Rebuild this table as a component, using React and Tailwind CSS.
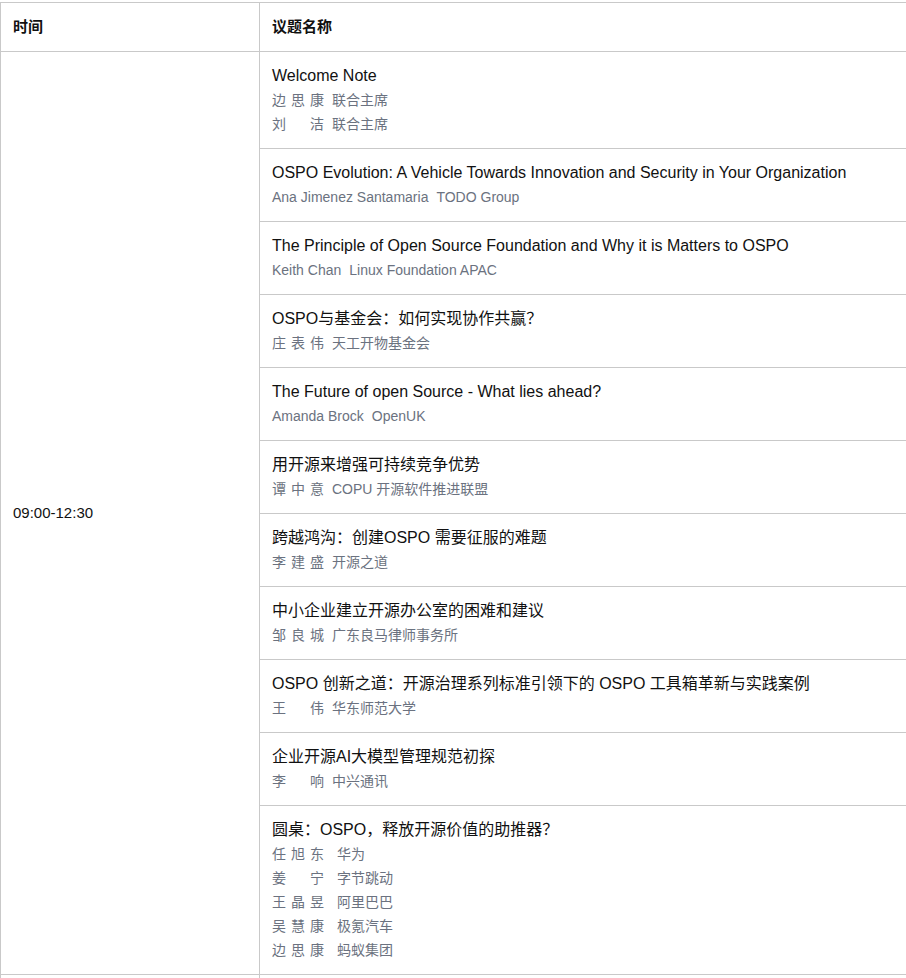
const sessions = [
  {
    title: "Welcome Note",
    speakers: [
      ["边思康", "联合主席"],
      ["刘洁", "联合主席"],
    ],
  },
  {
    title: "OSPO Evolution: A Vehicle Towards Innovation and Security in Your Organization",
    speakers: [["Ana Jimenez Santamaria", "TODO Group"]],
  },
  {
    title: "The Principle of Open Source Foundation and Why it is Matters to OSPO",
    speakers: [["Keith Chan", "Linux Foundation APAC"]],
  },
  { title: "OSPO与基金会：如何实现协作共赢？", speakers: [["庄表伟", "天工开物基金会"]] },
  {
    title: "The Future of open Source - What lies ahead?",
    speakers: [["Amanda Brock", "OpenUK"]],
  },
  { title: "用开源来增强可持续竞争优势", speakers: [["谭中意", "COPU 开源软件推进联盟"]] },
  { title: "跨越鸿沟：创建OSPO 需要征服的难题", speakers: [["李建盛", "开源之道"]] },
  { title: "中小企业建立开源办公室的困难和建议", speakers: [["邹良城", "广东良马律师事务所"]] },
  {
    title: "OSPO 创新之道：开源治理系列标准引领下的 OSPO 工具箱革新与实践案例",
    speakers: [["王伟", "华东师范大学"]],
  },
  { title: "企业开源AI大模型管理规范初探", speakers: [["李响", "中兴通讯"]] },
  {
    title: "圆桌：OSPO，释放开源价值的助推器？",
    wide: true,
    speakers: [
      ["任旭东", "华为"],
      ["姜宁", "字节跳动"],
      ["王晶昱", "阿里巴巴"],
      ["吴慧康", "极氪汽车"],
      ["边思康", "蚂蚁集团"],
    ],
  },
];

const isCjk = (s) => /^[\u4e00-\u9fff]+$/.test(s);

function Name({ name }) {
  if (!isCjk(name)) return <span>{name}</span>;
  return (
    <span className="inline-flex w-[52px] justify-between">
      {name.split("").map((c, i) => (
        <span key={i}>{c}</span>
      ))}
    </span>
  );
}

export default function App() {
  return (
    <div className="w-full overflow-hidden bg-white pt-[2px] font-['Liberation_Sans','Noto_Sans_CJK_SC',sans-serif] text-[#111]">
      <table className="w-[930px] table-fixed border-collapse border border-[#c9c9c9]">
        <colgroup>
          <col className="w-[259px]" />
          <col />
        </colgroup>
        <thead>
          <tr>
            <th className="border border-[#c9c9c9] px-3 py-3 text-left text-[15px] font-bold leading-6">
              时间
            </th>
            <th className="border border-[#c9c9c9] px-3 py-3 text-left text-[15px] font-bold leading-6">
              议题名称
            </th>
          </tr>
        </thead>
        <tbody>
          {sessions.map((s, i) => (
            <tr key={i}>
              {i === 0 && (
                <td
                  rowSpan={sessions.length}
                  className="border border-[#c9c9c9] px-3 align-middle text-[15px] leading-6"
                >
                  09:00-12:30
                </td>
              )}
              <td className="border border-[#c9c9c9] px-3 py-3 align-top">
                <div className="text-base leading-6">{s.title}</div>
                {s.speakers.map(([name, org], j) => (
                  <div key={j} className="text-sm leading-6 text-[#6b7280]">
                    <Name name={name} />
                    <span className={s.wide ? "ml-[13px]" : "ml-2"}>{org}</span>
                  </div>
                ))}
              </td>
            </tr>
          ))}
          <tr>
            <td className="h-12 border border-[#c9c9c9]"></td>
            <td className="h-12 border border-[#c9c9c9]"></td>
          </tr>
        </tbody>
      </table>
    </div>
  );
}
